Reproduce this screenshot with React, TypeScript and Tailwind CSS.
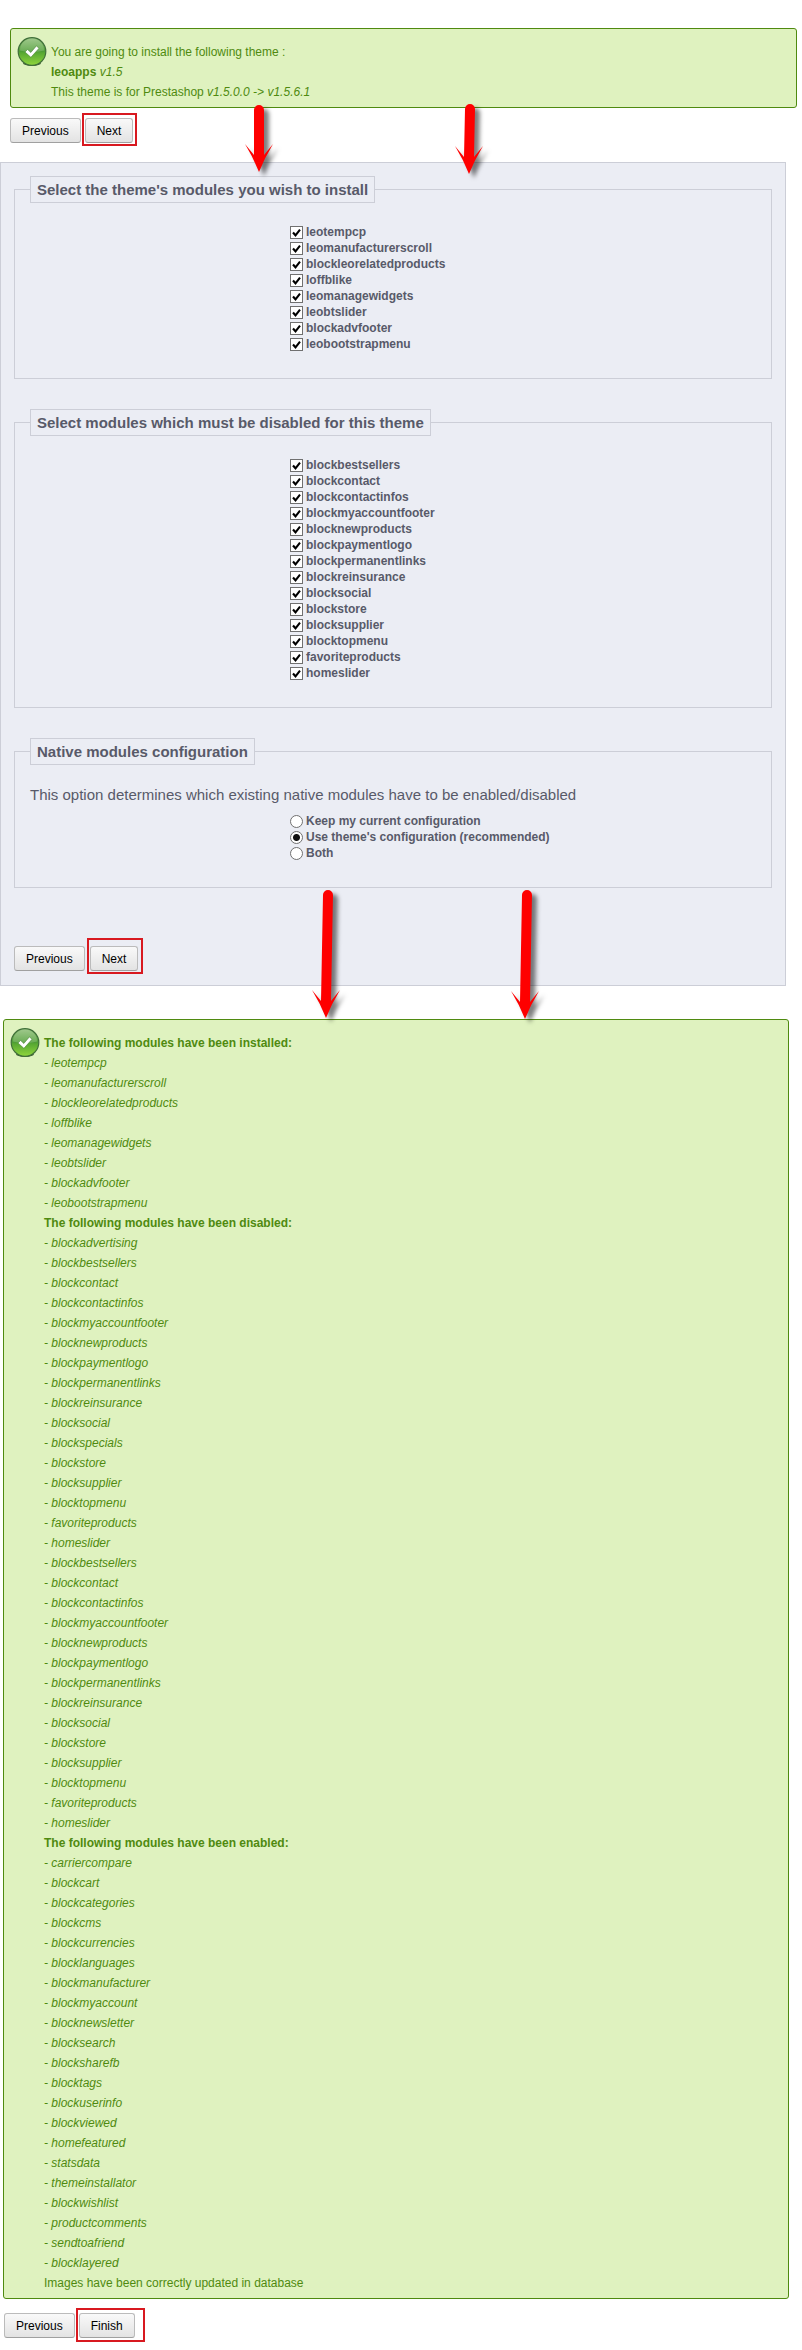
import React, { useState } from 'react';

type ConfigMode = 'keep' | 'theme' | 'both';

const THEME_MODULES = [
  'leotempcp',
  'leomanufacturerscroll',
  'blockleorelatedproducts',
  'loffblike',
  'leomanagewidgets',
  'leobtslider',
  'blockadvfooter',
  'leobootstrapmenu',
];

const CONFLICTING_MODULES = [
  'blockbestsellers',
  'blockcontact',
  'blockcontactinfos',
  'blockmyaccountfooter',
  'blocknewproducts',
  'blockpaymentlogo',
  'blockpermanentlinks',
  'blockreinsurance',
  'blocksocial',
  'blockstore',
  'blocksupplier',
  'blocktopmenu',
  'favoriteproducts',
  'homeslider',
];

const DISABLED_MODULES = [
  'blockadvertising',
  'blockbestsellers',
  'blockcontact',
  'blockcontactinfos',
  'blockmyaccountfooter',
  'blocknewproducts',
  'blockpaymentlogo',
  'blockpermanentlinks',
  'blockreinsurance',
  'blocksocial',
  'blockspecials',
  'blockstore',
  'blocksupplier',
  'blocktopmenu',
  'favoriteproducts',
  'homeslider',
  ...CONFLICTING_MODULES,
];

const ENABLED_MODULES = [
  'carriercompare',
  'blockcart',
  'blockcategories',
  'blockcms',
  'blockcurrencies',
  'blocklanguages',
  'blockmanufacturer',
  'blockmyaccount',
  'blocknewsletter',
  'blocksearch',
  'blocksharefb',
  'blocktags',
  'blockuserinfo',
  'blockviewed',
  'homefeatured',
  'statsdata',
  'themeinstallator',
  'blockwishlist',
  'productcomments',
  'sendtoafriend',
  'blocklayered',
];

const REPORT = [
  { title: 'The following modules have been installed:', modules: THEME_MODULES },
  { title: 'The following modules have been disabled:', modules: DISABLED_MODULES },
  { title: 'The following modules have been enabled:', modules: ENABLED_MODULES },
];

const CONFIG_OPTIONS: { value: ConfigMode; label: string }[] = [
  { value: 'keep', label: 'Keep my current configuration' },
  { value: 'theme', label: "Use theme's configuration (recommended)" },
  { value: 'both', label: 'Both' },
];

const SuccessIcon = () => (
  <svg className="mt-2 h-[30px] w-[30px] shrink-0" viewBox="0 0 30 30" aria-hidden="true">
    <defs>
      <linearGradient id="ok-fill" x1="0" y1="0" x2="0" y2="1">
        <stop offset="0" stopColor="#8fbf78" />
        <stop offset="0.5" stopColor="#4f9e35" />
        <stop offset="0.55" stopColor="#58a832" />
        <stop offset="1" stopColor="#8fd63c" />
      </linearGradient>
    </defs>
    <ellipse cx="15" cy="26" rx="9" ry="3" fill="#3d5a30" />
    <circle cx="15" cy="14.5" r="13.8" fill="url(#ok-fill)" stroke="#40703a" strokeWidth="1.2" />
    <path d="M3 13.5a12 12 0 0 1 24 0q-12 3-24 0z" fill="#fff" opacity="0.16" />
    <path d="M8 15l2.6-2.5 3.2 3 5.6-6.6 2.6 2.4-8.1 9z" fill="#fff" stroke="#3c7a28" strokeWidth="0.5" />
  </svg>
);

const Notice = ({ children }: { children: React.ReactNode }) => (
  <div className="flex gap-1 rounded-[3px] border border-[#4f8a10] bg-[#dff2bf] pl-[6px] leading-5 text-[#4f8a10]">
    <SuccessIcon />
    <div className="pt-[13px] pb-[5px]">{children}</div>
  </div>
);

const WizardButton = ({ children }: { children: React.ReactNode }) => (
  <button
    type="button"
    className="h-[25px] rounded-[3px] border border-[#bbbbbb] border-b-[#a0a0a0] bg-linear-to-b from-[#f9f9f9] to-[#e3e3e3] px-[11px] text-black"
  >
    {children}
  </button>
);

// red frame drawn around the button to click
const Highlight = ({ frame, children }: { frame: string; children: React.ReactNode }) => (
  <div className="relative">
    {children}
    <span className={`pointer-events-none absolute border-2 border-[#d81920] ${frame}`} />
  </div>
);

const Arrow = ({ length, lean = 0, className }: { length: number; lean?: number; className: string }) => {
  const tip = 16 - lean;
  return (
    <svg
      className={`pointer-events-none absolute overflow-visible drop-shadow-[5px_4px_2px_rgba(0,0,0,0.5)] ${className}`}
      width="32"
      height={length}
      aria-hidden="true"
    >
      <path
        d={`M11 5a5 5 0 0 1 10 0L${tip + 5} ${length - 17}L${tip + 14} ${length - 28}Q${tip + 6} ${length - 15} ${tip} ${length}Q${tip - 6} ${length - 15} ${tip - 14} ${length - 28}L${tip - 5} ${length - 17}Z`}
        fill="#fe0000"
      />
    </svg>
  );
};

const Group = ({ title, children }: { title: string; children: React.ReactNode }) => (
  <fieldset className="border border-[#ccced7] px-[15px] pb-[26px]">
    <legend className="h-[27px] border border-[#ccced7] px-[6px] text-[15px] leading-[25px] font-bold">
      {title}
    </legend>
    {children}
  </fieldset>
);

const ModuleList = ({ prefix, modules }: { prefix: string; modules: string[] }) => (
  <ul className="ml-[260px] pt-[21px]">
    {modules.map((name) => (
      <li key={name} className="flex h-4 items-center gap-[3px]">
        <span className="grid">
          <input
            type="checkbox"
            id={`${prefix}-${name}`}
            defaultChecked
            className="peer col-start-1 row-start-1 size-[13px] appearance-none border border-[#707070] bg-white"
          />
          <svg
            className="pointer-events-none invisible col-start-1 row-start-1 size-[13px] peer-checked:visible"
            viewBox="0 0 13 13"
            aria-hidden="true"
          >
            <path d="M3 6.5l2.5 2.8L10 3.6" fill="none" stroke="#000" strokeWidth="2.1" />
          </svg>
        </span>
        <label htmlFor={`${prefix}-${name}`} className="font-bold">
          {name}
        </label>
      </li>
    ))}
  </ul>
);

export default function App() {
  const [mode, setMode] = useState<ConfigMode>('theme');

  return (
    <main className="bg-white pt-7 pb-3 font-['Liberation_Sans',Arial,sans-serif] text-xs leading-4">
      {/* Step 1: theme summary */}
      <section className="relative z-10 mr-[5px] ml-[10px] pb-[19px]">
        <Notice>
          <p>You are going to install the following theme :</p>
          <p>
            <b>leoapps</b> <i>v1.5</i>
          </p>
          <p>
            This theme is for Prestashop <i>{'v1.5.0.0 -> v1.5.6.1'}</i>
          </p>
        </Notice>
        <div className="mt-[10px] flex gap-1">
          <WizardButton>Previous</WizardButton>
          <Highlight frame="-top-[5px] -right-1 -bottom-[3px] -left-[3px]">
            <WizardButton>Next</WizardButton>
          </Highlight>
        </div>
        <Arrow length={67} className="top-[77px] left-[233px]" />
        <Arrow length={70} lean={1} className="top-[76px] left-[444px]" />
      </section>

      {/* Step 2: module selection */}
      <form
        onSubmit={(e) => e.preventDefault()}
        className="relative mr-4 border border-[#ccced7] bg-[#ebedf4] px-[13px] pt-[13px] pb-[14px] text-[#585a69]"
      >
        <div className="flex flex-col gap-[30px]">
          <Group title="Select the theme's modules you wish to install">
            <ModuleList prefix="install" modules={THEME_MODULES} />
          </Group>
          <Group title="Select modules which must be disabled for this theme">
            <ModuleList prefix="disable" modules={CONFLICTING_MODULES} />
          </Group>
          <Group title="Native modules configuration">
            <p className="pt-[21px] text-[15px] leading-[18px]">
              This option determines which existing native modules have to be enabled/disabled
            </p>
            <div className="ml-[260px] pt-[9px]">
              {CONFIG_OPTIONS.map((option) => (
                <div key={option.value} className="flex h-4 items-center gap-[3px]">
                  <input
                    type="radio"
                    id={`config-${option.value}`}
                    name="config"
                    checked={mode === option.value}
                    onChange={() => setMode(option.value)}
                    className="size-[13px] appearance-none rounded-full border border-[#707070] bg-white checked:bg-[radial-gradient(circle,#111_3px,#fff_4px)]"
                  />
                  <label htmlFor={`config-${option.value}`} className="font-bold">
                    {option.label}
                  </label>
                </div>
              ))}
            </div>
          </Group>
        </div>
        <div className="mt-[58px] flex gap-[5px]">
          <WizardButton>Previous</WizardButton>
          <Highlight frame="-top-2 -right-[5px] -bottom-[3px] -left-[3px]">
            <WizardButton>Next</WizardButton>
          </Highlight>
        </div>
        <Arrow length={128} lean={2} className="bottom-[-33px] left-[311px]" />
        <Arrow length={129} lean={2} className="bottom-[-34px] left-[510px]" />
      </form>

      {/* Step 3: installation report */}
      <section className="mt-[33px] mr-[13px] ml-[3px]">
        <Notice>
          {REPORT.map((block) => (
            <div key={block.title}>
              <h2 className="font-bold">{block.title}</h2>
              <ul>
                {block.modules.map((name) => (
                  <li key={name} className="italic">
                    - {name}
                  </li>
                ))}
              </ul>
            </div>
          ))}
          <p>Images have been correctly updated in database</p>
        </Notice>
        <div className="mt-[14px] ml-px flex gap-1">
          <WizardButton>Previous</WizardButton>
          <Highlight frame="-top-[5px] -right-[10px] -bottom-1 -left-[3px]">
            <WizardButton>Finish</WizardButton>
          </Highlight>
        </div>
      </section>
    </main>
  );
}
